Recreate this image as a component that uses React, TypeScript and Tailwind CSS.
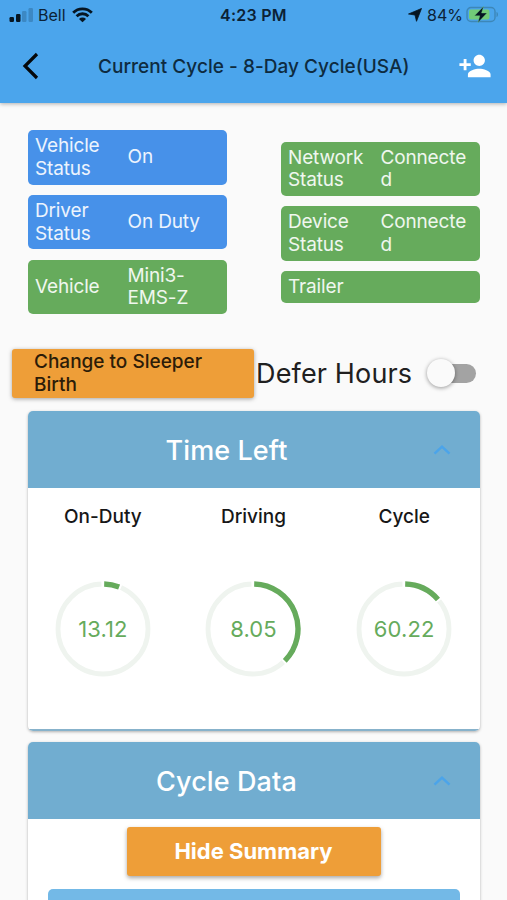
import type { ReactNode } from "react";
import { MdPersonAdd } from "react-icons/md";

type Status = { label: string[]; value: string[]; color: string; height: string };

const leftStatuses: Status[] = [
  { label: ["Vehicle", "Status"], value: ["On"], color: "bg-[#4791e9]", height: "h-[54.5px]" },
  { label: ["Driver", "Status"], value: ["On Duty"], color: "bg-[#4791e9]", height: "h-[54.5px]" },
  { label: ["Vehicle"], value: ["Mini3-", "EMS-Z"], color: "bg-[#66ab5c]", height: "h-[54.5px]" },
];

const rightStatuses: Status[] = [
  { label: ["Network", "Status"], value: ["Connecte", "d"], color: "bg-[#66ab5c]", height: "h-[54.5px]" },
  { label: ["Device", "Status"], value: ["Connecte", "d"], color: "bg-[#66ab5c]", height: "h-[54.5px]" },
  { label: ["Trailer"], value: [], color: "bg-[#66ab5c]", height: "h-[32px]" },
];

// start / end are degrees, clockwise from the top
const gauges = [
  { name: "On-Duty", value: "13.12", start: 1.5, end: 21 },
  { name: "Driving", value: "8.05", start: 1.5, end: 135 },
  { name: "Cycle", value: "60.22", start: 1.5, end: 49 },
];

function arc(start: number, end: number) {
  const r = 45;
  const point = (deg: number) => {
    const a = ((deg - 90) * Math.PI) / 180;
    return `${48 + r * Math.cos(a)} ${48 + r * Math.sin(a)}`;
  };
  return `M${point(start)}A${r} ${r} 0 0 1 ${point(end)}`;
}

function Lines({ lines }: { lines: string[] }) {
  return (
    <div>
      {lines.map((line) => (
        <div key={line} className="whitespace-nowrap">{line}</div>
      ))}
    </div>
  );
}

function StatusPill({ status }: { status: Status }) {
  return (
    <div className={`flex w-[199px] items-center rounded-[5px] pt-[1px] pl-[7px] text-[19px] leading-[22.6px] tracking-[-0.15px] text-white/90 ${status.color} ${status.height}`}>
      <div className="w-[92.5px]"><Lines lines={status.label} /></div>
      <Lines lines={status.value} />
    </div>
  );
}

function StatusBar() {
  return (
    <div className="grid h-[30px] grid-cols-3 items-center text-[16px] text-[#0b2236]">
      <div className="flex items-center pl-[9px]">
        <svg width="25" height="15" viewBox="0 0 25 15">
          <rect x="0.5" y="9" width="4.5" height="5" rx="1.2" fill="#061522" />
          <rect x="7" y="6" width="4.5" height="8" rx="1.2" fill="#061522" />
          <rect x="13" y="3" width="4.5" height="11" rx="1.2" fill="#3c88c4" />
          <rect x="19.5" y="0" width="4.5" height="14" rx="1.2" fill="#3c88c4" />
        </svg>
        <span className="ml-[4px]">Bell</span>
        <svg className="ml-[6px]" width="21" height="16" viewBox="0 0 21 16" fill="none" stroke="#061522" strokeWidth="2.8">
          <path d="M1.2 5.7a13 13 0 0 1 18.6 0" />
          <path d="M4.6 9.2a8.3 8.3 0 0 1 11.8 0" />
          <path d="M7 11.900a5 5 0 0 1 7 0L10.500 15.300z" fill="#061522" stroke="none" />
        </svg>
      </div>
      <div className="text-center font-semibold tracking-[0.25px] whitespace-nowrap">4:23 PM</div>
      <div className="flex items-center justify-end pr-[8px]">
        <svg width="14" height="14" viewBox="0 0 14 14" fill="#061522">
          <path d="M13.500.500 8.500 13.300 7 7 .5 6z" stroke="#061522" strokeWidth=".8" strokeLinejoin="round" />
        </svg>
        <span className="ml-[5px]">84%</span>
        <svg className="ml-[3px]" width="33" height="18" viewBox="0 0 33 18">
          <rect x="1" y="1.500" width="28" height="14" rx="4" fill="none" stroke="#3d87b8" strokeWidth="1.400" />
          <rect x="3" y="3.500" width="20.500" height="10" rx="2" fill="#72cb78" />
          <path d="M30.500 6c2 .5 2 4.500 0 5z" fill="#3d87b8" />
          <path d="M17.500.500 8.500 9.800h5.300L12 16.500l9-9.500h-5.400z" fill="#061522" stroke="#72cb78" strokeWidth=".4" />
        </svg>
      </div>
    </div>
  );
}

function Panel({ title, className, children }: { title: string; className: string; children: ReactNode }) {
  return (
    <section className={`mx-auto w-[452px] overflow-hidden rounded-[5px] bg-white shadow-[0_1px_3px_rgba(0,0,0,0.3)] ${className}`}>
      <header className="grid h-[77px] grid-cols-[1fr_54px] items-center bg-[#71add0]">
        <h2 className="pt-[3px] text-center text-[27px] font-medium tracking-[0.1px] text-white">{title}</h2>
        <svg className="ml-[7px]" width="18" height="12" viewBox="0 0 18 12" fill="none" stroke="#4ba4ea" strokeWidth="2.500">
          <path d="M1.500 9.700 9 2.700l7.500 7" />
        </svg>
      </header>
      {children}
    </section>
  );
}

function Gauge({ name, value, start, end }: (typeof gauges)[number]) {
  return (
    <div className="flex flex-col items-center">
      <div className="text-[19px] leading-[24px] font-medium text-[#171717]">{name}</div>
      <div className="mt-[52px] grid size-[96px] place-items-center">
        <svg className="col-start-1 row-start-1" width="96" height="96" viewBox="0 0 96 96" fill="none">
          <circle cx="48" cy="48" r="45" stroke="#eff4ef" strokeWidth="4.800" />
          <path d={arc(start - 3.500, end + 2.500)} stroke="#fff" strokeWidth="6" />
          <path d={arc(start, end)} stroke="#66ab5c" strokeWidth="5.400" />
        </svg>
        <span className="col-start-1 row-start-1 text-[22px] tracking-[0.1px] text-[#66ab5c]">{value}</span>
      </div>
    </div>
  );
}

export default function App() {
  return (
    <main className="flex h-[900px] w-[507px] flex-col overflow-hidden bg-[#fafafa] font-['Inter',sans-serif]">
      <div className="h-[103px] shrink-0 bg-[#4ba5ec] shadow-[0_1px_4px_rgba(0,0,0,0.3)]">
        <StatusBar />
        <div className="flex h-[71px] items-center">
          <svg className="ml-[22px]" width="18" height="28" viewBox="0 0 18 28" fill="none" stroke="#05080b" strokeWidth="3.200">
            <path d="M15 2 3 14l12 12" />
          </svg>
          <h1 className="ml-[58px] w-[314px] pt-[3px] text-[19px] font-medium tracking-[0.03px] whitespace-nowrap text-[#0e2b40]">Current Cycle - 8-Day Cycle(USA)</h1>
          <MdPersonAdd className="ml-[46px] size-[34px] text-white" />
        </div>
      </div>

      <div className="flex h-[245px] shrink-0 justify-between pt-[27px] pr-[27px] pl-[28px]">
        <div className="flex flex-col gap-[10.300px]">
          {leftStatuses.map((s, i) => <StatusPill key={i} status={s} />)}
        </div>
        <div className="flex flex-col gap-[10.300px] pt-[11.500px]">
          {rightStatuses.map((s, i) => <StatusPill key={i} status={s} />)}
        </div>
      </div>

      <div className="flex h-[50px] shrink-0 items-center pl-[12px]">
        <button className="h-[49px] w-[242px] rounded-[3px] bg-[#ee9e38] pt-[2px] pl-[22px] text-left text-[19px] leading-[22.600px] font-medium text-[#2c1c08] shadow-[0_1px_4px_rgba(0,0,0,0.35)]">
          <Lines lines={["Change to Sleeper", "Birth"]} />
        </button>
        <span className="ml-[2px] w-[161px] pt-[2px] text-[27px] tracking-[0.15px] whitespace-nowrap text-[#202020]">Defer Hours</span>
        <div className="ml-[16px] flex h-[19px] w-[43px] items-center rounded-full bg-[#a3a3a3]">
          <div className="-ml-[6px] size-[28px] shrink-0 rounded-full bg-[#fafafa] shadow-[0_1px_4px_rgba(0,0,0,0.4)]" />
        </div>
      </div>

      <Panel title="Time Left" className="mt-[13px] h-[320px] shrink-0">
        <div className="grid h-[243px] grid-cols-3 border-b-[2.500px] border-[#87b2cb] pt-[17px]">
          {gauges.map((g) => <Gauge key={g.name} {...g} />)}
        </div>
      </Panel>

      <Panel title="Cycle Data" className="mt-[11px] h-[200px] shrink-0">
        <div className="flex flex-col items-center pt-[8px]">
          <button className="h-[49px] w-[254px] rounded-[3px] bg-[#ee9e38] text-[22px] font-bold text-white shadow-[0_2px_4px_rgba(0,0,0,0.35)]">Hide Summary</button>
          <div className="mt-[13px] h-[60px] w-[412px] rounded-[5px] bg-[#73b9e7]" />
        </div>
      </Panel>
    </main>
  );
}
